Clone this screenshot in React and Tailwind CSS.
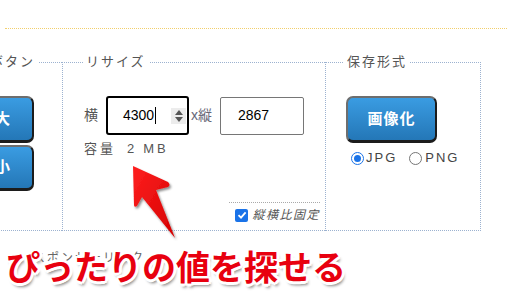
import React from 'react';

const btn =
  'flex items-center justify-center rounded-[7px] border-2 border-t-[#6e6e6e] border-l-[#6e6e6e] border-r-[#1c1c1c] border-b-[3px] border-b-[#1c1c1c] bg-linear-to-b from-[#3a9ce2] to-[#2477b7] text-white font-bold text-[15px] tracking-[1px]';

function Spinner() {
  return (
    <div className="ml-auto mr-[1px] flex h-[16px] w-[15px] flex-col items-center justify-center gap-[2px] bg-[#ececec]">
      <svg width="8" height="5" viewBox="0 0 8 5"><path d="M4 0 L8 5 L0 5 Z" fill="#555" /></svg>
      <svg width="8" height="5" viewBox="0 0 8 5"><path d="M0 0 L8 0 L4 5 Z" fill="#555" /></svg>
    </div>
  );
}

function Arrow() {
  return (
    <svg className="absolute left-[125px] top-[160px]" width="62" height="86" viewBox="0 0 62 86">
      <defs>
        <linearGradient id="ar" x1="0" y1="0" x2="1" y2="1">
          <stop offset="0" stopColor="#ff2020" />
          <stop offset="1" stopColor="#d40000" />
        </linearGradient>
        <filter id="sh" x="-20%" y="-20%" width="150%" height="150%">
          <feDropShadow dx="1.5" dy="2" stdDeviation="1.2" floodColor="#000" floodOpacity="0.45" />
        </filter>
      </defs>
      <path
        d="M8 6 L43 22 Q46 25 43 27 L31 30 L50 78 L17 37 L12 46 Q9 48 9 45 Z"
        fill="url(#ar)"
        filter="url(#sh)"
      />
    </svg>
  );
}

export default function App() {
  return (
    <div className="relative h-[299px] w-[507px] overflow-hidden bg-white font-['Liberation_Sans','Noto_Sans_CJK_JP',sans-serif] text-[#444]">
      <div className="ml-[5px] h-[29px] border-b border-dotted border-[#f2cf6c]" />

      <div className="mt-[25px] flex">
        {/* ボタン */}
        <fieldset className="-ml-[46px] h-[177px] w-[108px] shrink-0 border-t border-b border-dotted border-[#9cb2d0]">
          <legend className="ml-[33px] px-[3px] text-[13px] leading-[16px] tracking-[2px] text-[#555]">ボタン</legend>
          <div className="ml-[2px] mt-[26px] flex flex-col gap-[2px]">
            <div className={btn + ' h-[47px] w-[78px]'}>拡大</div>
            <div className={btn + ' h-[46px] w-[78px]'}>縮小</div>
          </div>
        </fieldset>

        {/* リサイズ */}
        <fieldset className="flex h-[177px] w-[263px] shrink-0 flex-col border border-r-0 border-dotted border-[#9cb2d0]">
          <legend className="ml-[20px] px-[3px] text-[13px] leading-[16px] tracking-[2px] text-[#555]">リサイズ</legend>
          <div className="ml-[21px] mt-[26px] flex items-center">
            <span className="text-[14px] text-[#555]">横</span>
            <div className="ml-[8px] flex h-[39px] w-[83px] items-center rounded-[3px] border-2 border-black pl-[15px] text-[14px] text-black">
              <span>4300</span>
              <span className="ml-[1px] h-[17px] w-px bg-black" />
              <Spinner />
            </div>
            <span className="ml-[2px] text-[14px] text-[#667]">x縦</span>
            <div className="ml-[8px] flex h-[38px] w-[84px] items-center rounded-[2px] border border-[#767676] pl-[17px] text-[14px] text-black">
              2867
            </div>
          </div>
          <div className="ml-[21px] mt-[5px] flex text-[13px] leading-[18px] tracking-[3px] text-[#555]">
            <span>容量</span>
            <span className="ml-[11px]">2</span>
            <span className="ml-[6px]">MB</span>
          </div>
          <div className="mr-[5px] mt-[44px] w-[91px] self-end border-t border-dotted border-[#aaa]" />
          <div className="mr-[5px] mt-[4px] flex items-center self-end">
            <span className="flex h-[13px] w-[13px] items-center justify-center rounded-[2px] bg-[#1a73e8]">
              <svg width="10" height="10" viewBox="0 0 10 10">
                <path d="M1.5 5.2 L4 7.6 L8.6 2.4" fill="none" stroke="#fff" strokeWidth="1.8" />
              </svg>
            </span>
            <span className="ml-[4px] text-[12px] italic leading-[16px] tracking-[1.5px] text-[#555]">縦横比固定</span>
          </div>
        </fieldset>

        {/* 保存形式 */}
        <fieldset className="h-[177px] w-[156px] shrink-0 border border-dotted border-[#9cb2d0]">
          <legend className="ml-[18px] px-[3px] text-[13px] leading-[16px] tracking-[2px] text-[#555]">保存形式</legend>
          <div className={btn + ' ml-[20px] mt-[26px] h-[47px] w-[91px]'}>画像化</div>
          <div className="ml-[25px] mt-[8px] flex items-center text-[13px] leading-[14px] tracking-[2px] text-[#444]">
            <span className="flex h-[13px] w-[13px] items-center justify-center rounded-full border-[1.5px] border-[#1a73e8]">
              <span className="h-[7px] w-[7px] rounded-full bg-[#1a73e8]" />
            </span>
            <span className="ml-[2px]">JPG</span>
            <span className="ml-[12px] h-[13px] w-[13px] rounded-full border border-[#767676]" />
            <span className="ml-[3px]">PNG</span>
          </div>
        </fieldset>
      </div>

      <div className="ml-[33px] mt-[19px] text-[12px] leading-[16px] tracking-[2px] text-[#666]">スポンサーリンク</div>

      <Arrow />

      <div className="absolute left-[6px] top-[244px] text-[34px] font-bold leading-[48px] text-[#e8000f] [text-shadow:3px_0_0_#fff,-3px_0_0_#fff,0_3px_0_#fff,0_-3px_0_#fff,2px_2px_0_#fff,-2px_-2px_0_#fff,2px_-2px_0_#fff,-2px_2px_0_#fff,2px_4px_3px_#8a8a8a]">
        ぴったりの値を探せる
      </div>
    </div>
  );
}
